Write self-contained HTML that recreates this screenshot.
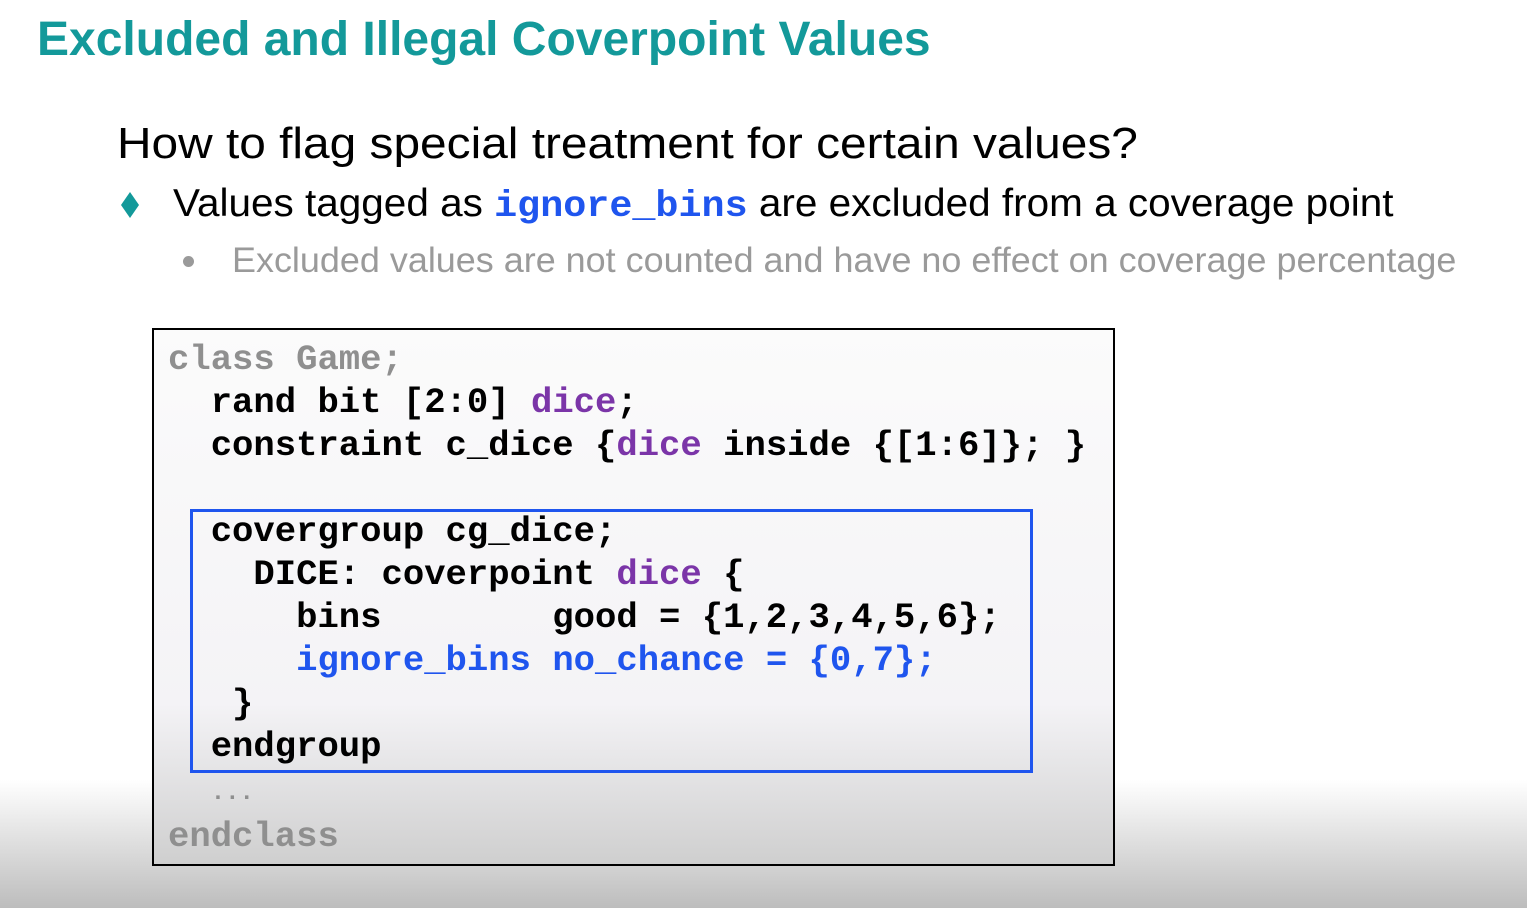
<!DOCTYPE html>
<html><head><meta charset="utf-8"><style>
body{margin:0;width:1527px;height:908px;overflow:hidden;position:relative;font-family:"Liberation Sans",sans-serif;
background:linear-gradient(#fff 0,#fff 780px,#bdbdbd 908px);}
.a{position:absolute;white-space:pre;line-height:1}
.t{left:37px;top:16px;font-size:48px;font-weight:bold;color:#13999a}
.h{left:117px;top:122px;font-size:44px;color:#000;transform:scaleX(1.087);transform-origin:left}
.b{left:173px;top:184px;font-size:39px;color:#000;transform:scaleX(1.038);transform-origin:left}
.s{left:232px;top:243px;font-size:35px;color:#9a9a9a;transform:scaleX(1.027);transform-origin:left}
.code{font-family:"Liberation Mono","Courier New",monospace;font-weight:bold;font-size:35.6px;color:#000;line-height:43px}
.box{position:absolute;left:152px;top:328px;width:959px;height:534px;border:2px solid #000;
background:linear-gradient(#fbfbfb,#f4f3f6 70%,#cfcfcf);}
.blue{position:absolute;left:190px;top:509px;width:837px;height:258px;border:3px solid #1f55ee;}
.g{color:#8f8f8f}.p{color:#7b35a8}.bl{color:#1f55ee}
</style></head><body>
<div class="a t">Excluded and Illegal Coverpoint Values</div>
<div class="a h">How to flag special treatment for certain values?</div>
<svg style="position:absolute;left:121px;top:192px" width="18" height="26"><polygon points="9,0 18,13 9,26 0,13" fill="#13999a"/></svg>
<div class="a b">Values tagged as <span class="code bl" style="font-size:37px">ignore_bins</span> are excluded from a coverage point</div>
<div style="position:absolute;left:183px;top:256px;width:11px;height:11px;border-radius:50%;background:#9a9a9a"></div>
<div class="a s">Excluded values are not counted and have no effect on coverage percentage</div>
<div class="box"></div>
<div class="blue"></div>
<div class="a code" style="left:168px;top:338px"><span class="g">class Game;</span>
  rand bit [2:0] <span class="p">dice</span>;
  constraint c_dice {<span class="p">dice</span> inside {[1:6]}; }

  covergroup cg_dice;
    DICE: coverpoint <span class="p">dice</span> {
      bins        good = {1,2,3,4,5,6};
      <span class="bl">ignore_bins no_chance = {0,7};</span>
   }
  endgroup
  <span class="g" style="font-size:24px">...</span>
<span class="g">endclass</span></div>
</body></html>
